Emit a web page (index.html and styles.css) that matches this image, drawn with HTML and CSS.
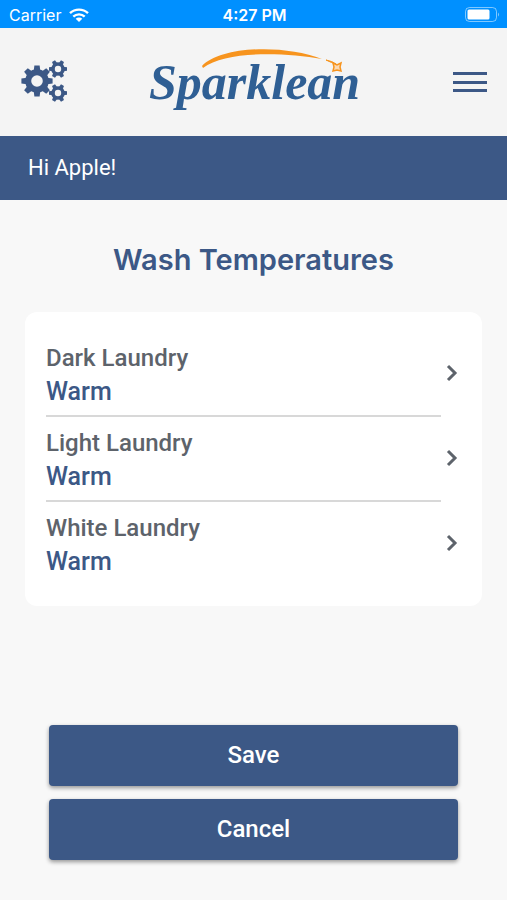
FILE: index.html
```html
<!DOCTYPE html>
<html lang="en">
<head>
	<meta charset="utf-8">
	<meta name="viewport" content="width=device-width, initial-scale=1">
	<title>Wash Temperatures</title>
	<link rel="stylesheet" href="styles.css">
</head>
<body>

<div class="status-bar">
	<div class="carrier">
		<span>Carrier</span>
		<svg width="20" height="14" viewBox="0 0 20 14" fill="none" stroke="#fff" stroke-width="2.4" aria-hidden="true">
			<path d="M1 5.2a13 13 0 0 1 18 0"/>
			<path d="M4.3 8.6a8.3 8.3 0 0 1 11.4 0"/>
			<path d="M10 14l-3.3-3.2a4.7 4.7 0 0 1 6.6 0z" fill="#fff" stroke="none"/>
		</svg>
	</div>
	<time>4:27 PM</time>
	<svg class="battery" width="36" height="16" viewBox="0 0 36 16" aria-hidden="true">
		<rect x="1.5" y="0.5" width="31" height="14" rx="4" fill="none" stroke="#fff" stroke-opacity="0.5"/>
		<rect x="3.5" y="2.5" width="22" height="10" rx="1.5" fill="#fff"/>
		<path d="M34 5.5a2.5 2.5 0 0 1 0 4z" fill="#fff" fill-opacity="0.5"/>
	</svg>
</div>

<header class="header">
	<button class="icon-button" type="button" aria-label="Settings">
		<svg width="48" height="44" viewBox="0 0 48 44" fill="#3c5886" aria-hidden="true">
			<defs>
				<path id="tooth" d="M-3.3 -10l.7-5.6h5.2l.7 5.6z"/>
				<path id="small-tooth" d="M-2.3 -5l.6-4h3.4l.6 4z"/>
				<g id="small-gear">
					<circle r="5" fill="none" stroke="#3c5886" stroke-width="3.6"/>
					<use href="#small-tooth" transform="rotate(30)"/>
					<use href="#small-tooth" transform="rotate(90)"/>
					<use href="#small-tooth" transform="rotate(150)"/>
					<use href="#small-tooth" transform="rotate(210)"/>
					<use href="#small-tooth" transform="rotate(270)"/>
					<use href="#small-tooth" transform="rotate(330)"/>
				</g>
			</defs>
			<g transform="translate(16 21)">
				<circle r="8.8" fill="none" stroke="#3c5886" stroke-width="6"/>
				<use href="#tooth"/>
				<use href="#tooth" transform="rotate(45)"/>
				<use href="#tooth" transform="rotate(90)"/>
				<use href="#tooth" transform="rotate(135)"/>
				<use href="#tooth" transform="rotate(180)"/>
				<use href="#tooth" transform="rotate(225)"/>
				<use href="#tooth" transform="rotate(270)"/>
				<use href="#tooth" transform="rotate(315)"/>
			</g>
			<use href="#small-gear" transform="translate(37 9)"/>
			<use href="#small-gear" transform="translate(37 33)"/>
		</svg>
	</button>
	<a class="logo" href="#">
		<svg width="220" height="72" viewBox="0 0 220 72" role="img" aria-label="Sparklean">
			<text class="logo-text" x="4" y="53">Sparklean</text>
			<path d="M57 20C76 0 139-2 177 13C137 6 80 5 58 22z" fill="#f7941e"/>
			<path d="M181 14q6 1 10 4q-4-1-10-4z" fill="#f7941e" stroke="#f7941e"/>
			<path d="M188 17l4 2l4-2l-1 4l1 4l-4-1l-4 1l1-4z" fill="#fbd9b3" stroke="#f7941e" stroke-width="1.5"/>
		</svg>
	</a>
	<button class="icon-button menu-button" type="button" aria-label="Menu">
		<svg width="36" height="24" viewBox="0 0 36 24" fill="#3c5886" aria-hidden="true">
			<rect x="1" y="2" width="34" height="3"/>
			<rect x="1" y="11" width="34" height="3"/>
			<rect x="1" y="19" width="34" height="3"/>
		</svg>
	</button>
</header>

<div class="greeting">Hi Apple!</div>

<main class="content">
	<h1>Wash Temperatures</h1>

	<ul class="settings-list">
		<li>
			<a class="setting" href="#">
				<span class="setting-text">
					<span class="setting-name">Dark Laundry</span>
					<span class="setting-value">Warm</span>
				</span>
				<svg class="chevron" width="12" height="18" viewBox="0 0 12 18" aria-hidden="true"><path d="M2 2l7 7l-7 7"/></svg>
			</a>
		</li>
		<li>
			<a class="setting" href="#">
				<span class="setting-text">
					<span class="setting-name">Light Laundry</span>
					<span class="setting-value">Warm</span>
				</span>
				<svg class="chevron" width="12" height="18" viewBox="0 0 12 18" aria-hidden="true"><path d="M2 2l7 7l-7 7"/></svg>
			</a>
		</li>
		<li>
			<a class="setting" href="#">
				<span class="setting-text">
					<span class="setting-name">White Laundry</span>
					<span class="setting-value">Warm</span>
				</span>
				<svg class="chevron" width="12" height="18" viewBox="0 0 12 18" aria-hidden="true"><path d="M2 2l7 7l-7 7"/></svg>
			</a>
		</li>
	</ul>

	<div class="actions">
		<button class="button" type="button">Save</button>
		<button class="button" type="button">Cancel</button>
	</div>
</main>

</body>
</html>
```

FILE: styles.css
```css
* {
	box-sizing: border-box;
}
body {
	margin: 0;
	background: #f8f8f8;
	font-family: Roboto, "Liberation Sans", sans-serif;
}
a {
	text-decoration: none;
}
.status-bar {
	display: grid;
	grid-template-columns: 1fr auto 1fr;
	align-items: center;
	height: 28px;
	padding: 2px 7px 0 9px;
	background: #0090ff;
	color: #fff;
	font-family: Inter, sans-serif;
	font-size: 16px;
}
.status-bar time {
	font-weight: 600;
}
.carrier {
	display: flex;
	align-items: center;
	gap: 8px;
}
.battery {
	justify-self: end;
}
.header {
	display: grid;
	grid-template-columns: 1fr auto 1fr;
	align-items: center;
	height: 108px;
	padding: 0 19px 0 21px;
	background: #f4f4f4;
}
.icon-button {
	display: flex;
	justify-self: start;
	padding: 0;
	border: 0;
	background: none;
	cursor: pointer;
}
.menu-button {
	justify-self: end;
}
.logo svg {
	display: block;
	overflow: visible;
}
.logo-text {
	font-family: "Liberation Serif", serif;
	font-size: 50px;
	font-style: italic;
	font-weight: bold;
	fill: #2f5f94;
}
.greeting {
	padding: 16px 28px;
	background: #3c5886;
	color: #fff;
	font-size: 22px;
	line-height: 32px;
}
.content {
	padding: 40px 25px;
}
h1 {
	margin: 0 0 32px;
	color: #3c5886;
	font-family: Inter, sans-serif;
	font-size: 29px;
	font-weight: 600;
	line-height: 40px;
	text-align: center;
}
.settings-list {
	margin: 0;
	padding: 20px 24px 19px 21px;
	border-radius: 12px;
	background: #fff;
	list-style: none;
}
.setting {
	display: flex;
	align-items: center;
	justify-content: space-between;
}
.setting-text {
	flex: 1;
	margin-right: 5px;
	padding: 10px 0 7px;
	border-bottom: 2px solid #d8d8d8;
	font-size: 24px;
	font-weight: 500;
	line-height: 33px;
}
li:last-child .setting-text {
	border-color: transparent;
}
.setting-name,
.setting-value {
	display: block;
}
.setting-name {
	color: #5d636b;
}
.setting-value {
	color: #3c5886;
	font-size: 25px;
}
.chevron {
	margin-bottom: 4px;
	fill: none;
	stroke: #5d636b;
	stroke-width: 3px;
}
.actions {
	display: flex;
	flex-direction: column;
	gap: 13px;
	margin: 119px 24px 0;
}
.button {
	height: 61px;
	padding: 0 0 2px;
	border: 0;
	border-radius: 4px;
	background: #3c5886;
	box-shadow: 0 2px 4px rgba(0, 0, 0, 0.4);
	color: #fff;
	font-family: inherit;
	font-size: 24px;
	font-weight: 500;
	cursor: pointer;
}
```
